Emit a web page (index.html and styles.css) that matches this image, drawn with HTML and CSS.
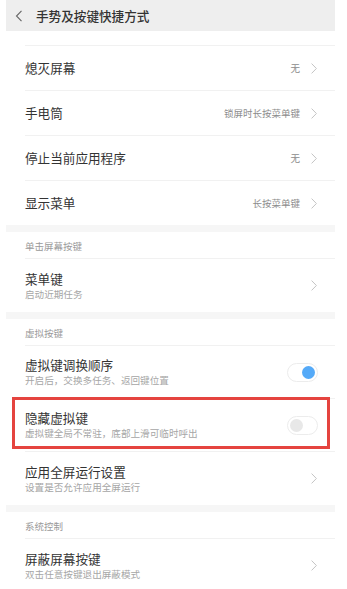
FILE: index.html
```html
<!DOCTYPE html>
<html lang="zh-CN">
<head>
<meta charset="utf-8">
<title>手势及按键快捷方式</title>
<link rel="stylesheet" href="styles.css">
</head>
<body>
<div class="screen">
  <header class="header">
    <svg class="back" width="8" height="12" viewBox="0 0 8 12"><path d="M6.5 0.8 L1.5 6 L6.5 11.2" fill="none" stroke="#666" stroke-width="1.1"/></svg>
    <span class="header-title">手势及按键快捷方式</span>
  </header>

  <div class="group">
    <div class="spacer"></div>
    <div class="row">
      <span class="title">熄灭屏幕</span>
      <span class="value">无</span>
      <svg class="chev" width="6" height="11" viewBox="0 0 6 11"><path d="M0.6 0.6 L5.4 5.5 L0.6 10.4" fill="none" stroke="#c4c4c4" stroke-width="1"/></svg>
    </div>
    <div class="row">
      <span class="title">手电筒</span>
      <span class="value">锁屏时长按菜单键</span>
      <svg class="chev" width="6" height="11" viewBox="0 0 6 11"><path d="M0.6 0.6 L5.4 5.5 L0.6 10.4" fill="none" stroke="#c4c4c4" stroke-width="1"/></svg>
    </div>
    <div class="row">
      <span class="title">停止当前应用程序</span>
      <span class="value">无</span>
      <svg class="chev" width="6" height="11" viewBox="0 0 6 11"><path d="M0.6 0.6 L5.4 5.5 L0.6 10.4" fill="none" stroke="#c4c4c4" stroke-width="1"/></svg>
    </div>
    <div class="row last">
      <span class="title">显示菜单</span>
      <span class="value">长按菜单键</span>
      <svg class="chev" width="6" height="11" viewBox="0 0 6 11"><path d="M0.6 0.6 L5.4 5.5 L0.6 10.4" fill="none" stroke="#c4c4c4" stroke-width="1"/></svg>
    </div>
  </div>

  <div class="band"></div>
  <div class="group">
    <div class="section">单击屏幕按键</div>
    <div class="row tall last">
      <div class="text">
        <span class="title">菜单键</span>
        <span class="sub">启动近期任务</span>
      </div>
      <svg class="chev" width="6" height="11" viewBox="0 0 6 11"><path d="M0.6 0.6 L5.4 5.5 L0.6 10.4" fill="none" stroke="#c4c4c4" stroke-width="1"/></svg>
    </div>
  </div>

  <div class="band"></div>
  <div class="group">
    <div class="section">虚拟按键</div>
    <div class="row tall">
      <div class="text">
        <span class="title">虚拟键调换顺序</span>
        <span class="sub">开启后，交换多任务、返回键位置</span>
      </div>
      <span class="toggle on"><span class="knob"></span></span>
    </div>
    <div class="row tall marked">
      <div class="text">
        <span class="title">隐藏虚拟键</span>
        <span class="sub">虚拟键全局不常驻，底部上滑可临时呼出</span>
      </div>
      <span class="toggle"><span class="knob"></span></span>
      <span class="highlight"></span>
    </div>
    <div class="row tall last">
      <div class="text">
        <span class="title">应用全屏运行设置</span>
        <span class="sub">设置是否允许应用全屏运行</span>
      </div>
      <svg class="chev" width="6" height="11" viewBox="0 0 6 11"><path d="M0.6 0.6 L5.4 5.5 L0.6 10.4" fill="none" stroke="#c4c4c4" stroke-width="1"/></svg>
    </div>
  </div>

  <div class="band"></div>
  <div class="group">
    <div class="section">系统控制</div>
    <div class="row tall last">
      <div class="text">
        <span class="title">屏蔽屏幕按键</span>
        <span class="sub">双击任意按键退出屏蔽模式</span>
      </div>
      <svg class="chev" width="6" height="11" viewBox="0 0 6 11"><path d="M0.6 0.6 L5.4 5.5 L0.6 10.4" fill="none" stroke="#c4c4c4" stroke-width="1"/></svg>
    </div>
  </div>
</div>
</body>
</html>
```

FILE: styles.css
```css
html, body {
  margin: 0;
  padding: 0;
  background: #ffffff;
}
body {
  font-family: "Noto Sans CJK SC", "Noto Sans", sans-serif;
  color: #333333;
  overflow: hidden;
}
.screen {
  margin-left: 6px;
  width: 329px;
  background: #ffffff;
}
.header {
  height: 31px;
  background: #eeeeee;
  display: flex;
  align-items: center;
}
.back {
  margin-left: 9px;
  margin-right: 13px;
}
.header-title {
  font-size: 12.6px;
  font-weight: 500;
  color: #333333;
}
.group {
  padding-left: 19px;
}
.spacer {
  height: 14px;
  border-bottom: 1px solid #f1f1f1;
}
.row {
  position: relative;
  display: flex;
  align-items: center;
  height: 44px;
  border-bottom: 1px solid #f1f1f1;
  padding-right: 18px;
}
.row.last {
  border-bottom: none;
}
.row.tall {
  height: 52px;
}
.row.tall.last {
  height: 53px;
}
.title {
  font-size: 12.6px;
  color: #333333;
  line-height: 16px;
  white-space: nowrap;
}
.row > .title {
  flex: 1;
}
.text {
  flex: 1;
  display: flex;
  flex-direction: column;
}
.sub {
  font-size: 9.6px;
  line-height: 13px;
  margin-top: 1px;
  color: #a6a6a6;
  white-space: nowrap;
}
.value {
  font-size: 9.5px;
  color: #8c8c8c;
  margin-right: 11px;
}
.chev {
  display: block;
}
.band {
  height: 7px;
  background: #f6f6f6;
}
.section {
  height: 27px;
  box-sizing: border-box;
  border-bottom: 1px solid #f1f1f1;
  font-size: 9.5px;
  color: #9a9a9a;
  display: flex;
  align-items: center;
  padding-top: 1px;
}
.toggle {
  width: 31px;
  height: 19px;
  box-sizing: border-box;
  border: 1px solid #ececec;
  border-radius: 10px;
  background: #ffffff;
  display: flex;
  align-items: center;
  padding: 0 2px;
  margin-right: -1px;
}
.toggle .knob {
  width: 13px;
  height: 13px;
  border-radius: 50%;
  background: #e8e8e8;
}
.toggle.on {
  justify-content: flex-end;
}
.toggle.on .knob {
  background: #55aaf8;
}
.highlight {
  position: absolute;
  left: -13px;
  right: 5px;
  top: -2px;
  bottom: 2px;
  border: 3px solid #e5443f;
  pointer-events: none;
}
```
